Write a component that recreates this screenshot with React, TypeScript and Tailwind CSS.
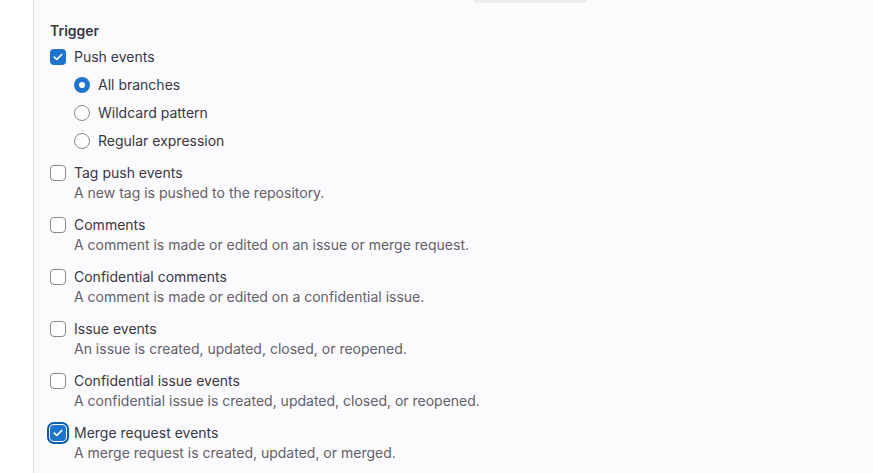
const font = { fontFamily: "Inter, 'Noto Sans', sans-serif" };

function Checkbox({ checked, focused }: { checked?: boolean; focused?: boolean }) {
  return (
    <span
      className={
        "flex h-4 w-4 shrink-0 items-center justify-center rounded-[4px] " +
        (checked ? "bg-[#1f75cb] " : "border border-[#89888d] bg-white ") +
        (focused ? "shadow-[0_0_0_1px_#fff,0_0_0_3px_#0b5cad]" : "")
      }
    >
      {checked && (
        <svg width="10" height="8" viewBox="0 0 10 8" fill="none">
          <path d="M1.3 4.1 3.8 6.5 8.7 1.5" stroke="#fff" strokeWidth="1.7" strokeLinecap="round" strokeLinejoin="round" />
        </svg>
      )}
    </span>
  );
}

function Radio({ checked }: { checked?: boolean }) {
  return (
    <span
      className={
        "flex h-4 w-4 shrink-0 items-center justify-center rounded-full " +
        (checked ? "bg-[#1f75cb]" : "border border-[#89888d] bg-white")
      }
    >
      {checked && <span className="h-[6px] w-[6px] rounded-full bg-white" />}
    </span>
  );
}

const events = [
  { label: "Tag push events", desc: "A new tag is pushed to the repository." },
  { label: "Comments", desc: "A comment is made or edited on an issue or merge request." },
  { label: "Confidential comments", desc: "A comment is made or edited on a confidential issue." },
  { label: "Issue events", desc: "An issue is created, updated, closed, or reopened." },
  { label: "Confidential issue events", desc: "A confidential issue is created, updated, closed, or reopened." },
  { label: "Merge request events", desc: "A merge request is created, updated, or merged.", checked: true, focused: true },
];

export default function App() {
  return (
    <div className="flex h-[473px] w-[873px] overflow-hidden bg-white text-sm text-[#3a383f]" style={font}>
      <div className="w-[34px] shrink-0 border-r border-[#dcdcde] bg-white" />
      <div className="flex-1 bg-[#fbfafd] pl-4">
        <div className="flex h-[21px] items-start">
          <div className="ml-[424px] h-[3px] w-[113px] rounded-b-[4px] bg-[#ececef]" />
        </div>
        <div className="mb-[6px] font-semibold leading-5">Trigger</div>

        <div className="flex items-center gap-2 leading-5">
          <Checkbox checked />
          <span>Push events</span>
        </div>
        <div className="mt-2 flex flex-col gap-2 pl-6">
          {[
            { l: "All branches", c: true },
            { l: "Wildcard pattern" },
            { l: "Regular expression" },
          ].map((r) => (
            <div key={r.l} className="flex items-center gap-2 leading-5">
              <Radio checked={r.c} />
              <span>{r.l}</span>
            </div>
          ))}
        </div>

        <div className="mt-3 flex flex-col gap-3">
          {events.map((e) => (
            <div key={e.label}>
              <div className="flex items-center gap-2 leading-5">
                <Checkbox checked={e.checked} focused={e.focused} />
                <span>{e.label}</span>
              </div>
              <div className="pl-6 leading-5 text-[#626168]">{e.desc}</div>
            </div>
          ))}
        </div>
      </div>
    </div>
  );
}
